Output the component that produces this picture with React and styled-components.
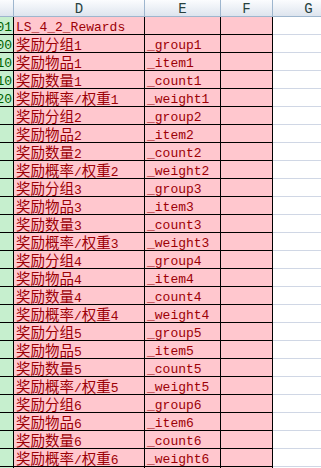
import React from "react";
import styled, { createGlobalStyle } from "styled-components";

const Global = createGlobalStyle`
  html, body { margin: 0; padding: 0; background: #ffffff; overflow: hidden; }
  #root { width: 321px; height: 468px; overflow: hidden; }
`;

const COLS = "14px 131px 76px 52px 72px";

const Sheet = styled.div`
  width: 345px;
  font-family: "Liberation Mono", "Noto Sans CJK SC", monospace;
`;

const HeaderRow = styled.div`
  display: grid;
  grid-template-columns: ${COLS};
  height: 17px;
  box-sizing: border-box;
  border-bottom: 1px solid #9eb6ce;
  background: linear-gradient(#fbfcfe 0%, #eef2f7 45%, #dde4ee 100%);
`;

const HeaderCell = styled.div`
  box-sizing: border-box;
  border-right: 1px solid #9eb6ce;
  color: #27413e;
  font-size: 14px;
  line-height: 16px;
  text-align: center;
  padding-top: 1px;
`;

const Row = styled.div`
  display: grid;
  grid-template-columns: ${COLS};
  height: 18px;
`;

const Cell = styled.div`
  box-sizing: border-box;
  height: 18px;
  border-right: 1px solid ${(p) => (p.$grid ? "transparent" : "#000000")};
  border-bottom: 1px solid ${(p) => (p.$grid ? "#d0d7e5" : "#000000")};
  background: ${(p) => p.$bg};
  color: ${(p) => p.$fg};
  font-size: 13px;
  line-height: 17px;
  padding-top: 2px;
  padding-left: 2px;
  white-space: nowrap;
  overflow: hidden;
`;

const NumCell = styled(Cell)`
  display: flex;
  justify-content: flex-end;
  padding-left: 0;
  padding-right: 1px;
`;

const Cjk = styled.span`
  font-family: "Noto Sans CJK SC", sans-serif;
  font-size: 14.5px;
  line-height: 1;
`;

const PINK = "#ffc7ce";
const RED = "#9c0006";
const GREEN = "#c6efce";
const DKGREEN = "#006100";

function renderText(str) {
  return str.split(/([\u3400-\u9fff]+)/).map((part, i) =>
    /[\u3400-\u9fff]/.test(part) ? <Cjk key={i}>{part}</Cjk> : part
  );
}

const rows = [
  { c: "1001", d: "LS_4_2_Rewards", e: "" },
  { c: "100", d: "奖励分组1", e: "_group1" },
  { c: "10", d: "奖励物品1", e: "_item1" },
  { c: "10", d: "奖励数量1", e: "_count1" },
  { c: "20", d: "奖励概率/权重1", e: "_weight1" },
];
for (let n = 2; n <= 6; n++) {
  rows.push({ c: "", d: `奖励分组${n}`, e: `_group${n}` });
  rows.push({ c: "", d: `奖励物品${n}`, e: `_item${n}` });
  rows.push({ c: "", d: `奖励数量${n}`, e: `_count${n}` });
  rows.push({ c: "", d: `奖励概率/权重${n}`, e: `_weight${n}` });
}
rows.push({ c: "", d: "", e: "" });

export default function App() {
  return (
    <>
      <Global />
      <Sheet>
        <HeaderRow>
          <HeaderCell />
          <HeaderCell>D</HeaderCell>
          <HeaderCell>E</HeaderCell>
          <HeaderCell>F</HeaderCell>
          <HeaderCell>G</HeaderCell>
        </HeaderRow>
        {rows.map((r, i) => (
          <Row key={i}>
            <NumCell $bg={GREEN} $fg={DKGREEN}>{r.c}</NumCell>
            <Cell $bg={PINK} $fg={RED}>{renderText(r.d)}</Cell>
            <Cell $bg={PINK} $fg={RED}>{r.e}</Cell>
            <Cell $bg={PINK} $fg={RED} />
            <Cell $bg="#ffffff" $grid />
          </Row>
        ))}
      </Sheet>
    </>
  );
}
